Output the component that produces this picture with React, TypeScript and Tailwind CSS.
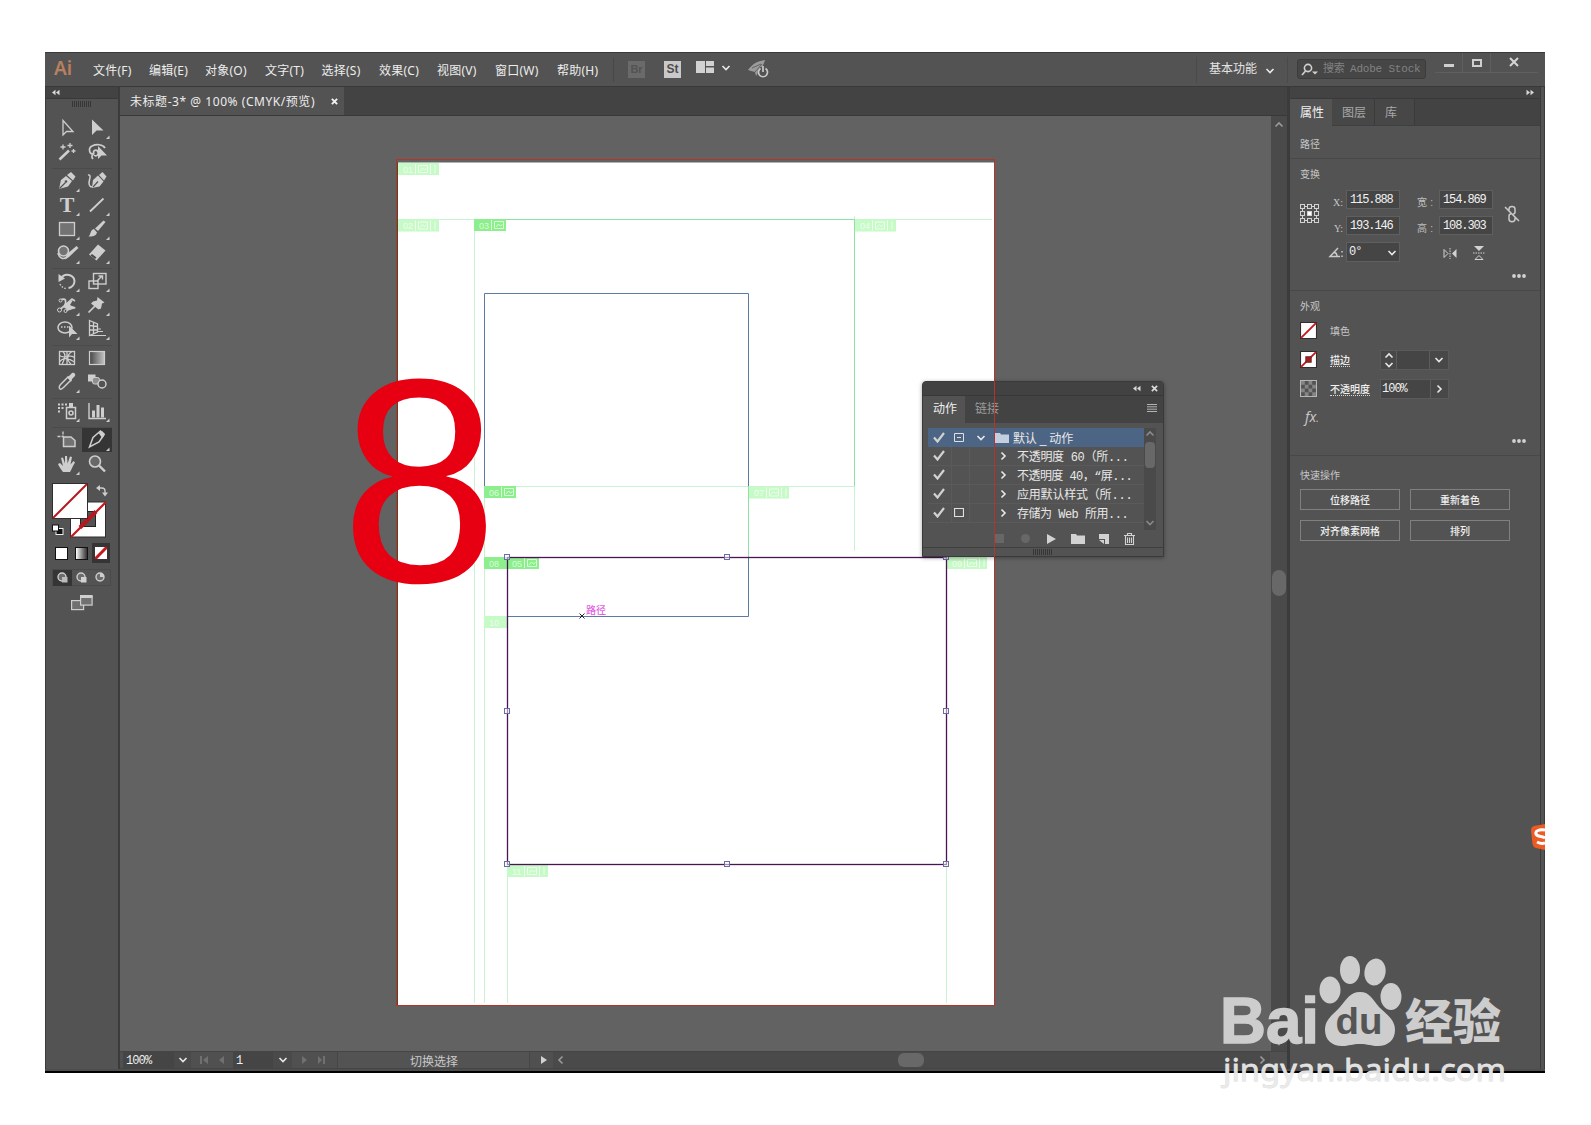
import React from "react";

const UI = "font-['Liberation_Sans','Noto_Sans_CJK_SC',sans-serif]";
const YH = "font-['Noto_Sans','Noto_Sans_CJK_SC',sans-serif]";
const MONO = "font-['Liberation_Mono','Noto_Sans_CJK_SC',monospace]";

function Chevron({ dir = "down", className = "" }: { dir?: "down" | "up" | "right" | "left"; className?: string }) {
  const d = { down: "M1.5 3l3.5 3.5L8.500 3", up: "M1.5 6.500L5 3l3.500 3.500", right: "M3.500 1.500L7 5 3.500 8.500", left: "M6.500 1.500L3 5l3.500 3.500" }[dir];
  return (
    <svg viewBox="0 0 10 10" className={`h-[10px] w-[10px] shrink-0 fill-none stroke-[#e8e8e8] stroke-[1.6] ${className}`}>
      <path d={d} />
    </svg>
  );
}

function DoubleArrow({ flip = false }: { flip?: boolean }) {
  return (
    <svg viewBox="0 0 9 7" className={`h-[7px] w-[9px] shrink-0 fill-[#d8d8d8] ${flip ? "-scale-x-100" : ""}`}>
      <path d="M4.500 .8v5.400L1 3.500zM8.500 .8v5.400L5 3.500z" />
    </svg>
  );
}

function Grip({ className = "" }: { className?: string }) {
  return (
    <svg viewBox="0 0 20 6" className={`h-[6px] w-[20px] ${className}`}>
      <path d="M.5 0v6M2.500 0v6M4.500 0v6M6.500 0v6M8.500 0v6M10.500 0v6M12.500 0v6M14.500 0v6M16.500 0v6M18.500 0v6" stroke="#363636" strokeWidth="1" />
    </svg>
  );
}

/* ---------- menu bar ---------- */

const menus: [string, string][] = [
  ["文件(F)", "w-[56px]"],
  ["编辑(E)", "w-[56px]"],
  ["对象(O)", "w-[60px]"],
  ["文字(T)", "w-[56.5px]"],
  ["选择(S)", "w-[57.5px]"],
  ["效果(C)", "w-[58px]"],
  ["视图(V)", "w-[58px]"],
  ["窗口(W)", "w-[62px]"],
  ["帮助(H)", "w-[56px]"],
];

function MenuBar() {
  return (
    <div className="flex h-[35px] shrink-0 border-t border-b border-[#393939] bg-[#535353]">
      <div className="w-[48px] pl-[9px] font-['Noto_Sans',sans-serif] text-[20px] leading-[30px] font-semibold text-[#b9805f]">
        <span className="inline-block origin-left scale-x-[0.95]">Ai</span>
      </div>
      <div className={`flex pt-[1px] text-[12px] leading-[33px] tracking-[0.25px] whitespace-nowrap text-[#ededed] ${YH}`}>
        {menus.map(([t, w]) => (
          <div key={t} className={w}>{t}</div>
        ))}
      </div>
      <div className="mt-[5px] h-[24px] w-px bg-[#474747]" />
      <div className="flex pt-[8px] pl-[14px]">
        <div className="h-[17px] w-[17px] bg-[#6a6a6a] text-center font-['Liberation_Sans',sans-serif] text-[11px] leading-[17px] font-bold text-[#535353]">Br</div>
        <div className="ml-[19px] h-[17px] w-[17px] bg-[#c9c9c9] text-center font-['Liberation_Sans',sans-serif] text-[12px] leading-[17px] font-bold text-[#4d4d4d]">St</div>
        <svg viewBox="0 0 18 12" className="ml-[15px] h-[12px] w-[18px] fill-[#d2d2d2]">
          <path d="M0 0h9v12H0zM10 0h8v5h-8zM10 6.500h8V12h-8z" />
        </svg>
        <Chevron className="mt-[2px] ml-[7px]" />
        <svg viewBox="0 0 24 18" className="mt-[-1px] ml-[17px] h-[18px] w-[24px]">
          <path d="M0 10C5 3 10 1 17 0c-1 4-3 8-7 13L8 16l-1-4-4-1z" fill="#9b9b9b" />
          <path d="M4 8l9-4M7 12l7-8" stroke="#656565" strokeWidth="1" />
          <circle cx="15" cy="12" r="5.500" fill="#535353" />
          <path d="M12.500 8.500a4.500 4.500 0 1 0 5 0M15 6v6" fill="none" stroke="#c9c9c9" strokeWidth="1.700" />
        </svg>
      </div>
      <div className="grow" />
      <div className="mt-[4px] h-[26px] w-px bg-[#4a4a4a]" />
      <div className={`w-[57px] pl-[12px] text-[12px] leading-[31px] whitespace-nowrap text-[#e4e4e4] ${YH}`}>基本功能</div>
      <Chevron className="mt-[13px] ml-[11px]" />
      <div className="mt-[4px] ml-[12px] h-[26px] w-px bg-[#4a4a4a]" />
      <div className="mt-[6px] ml-[9px] flex h-[20px] w-[129px] items-center rounded-[3px] border border-[#3c3c3c] bg-[#464646] pl-[3px]">
        <svg viewBox="0 0 18 13" className="h-[13px] w-[18px] fill-none stroke-[#d0d0d0] stroke-[1.6]">
          <circle cx="7" cy="5" r="3.600" />
          <path d="M4.500 8L1 12" />
          <path d="M11 8.500h6l-3 3z" fill="#d0d0d0" stroke="none" />
        </svg>
        <span className={`ml-[4px] text-[11px] tracking-[-0.2px] whitespace-pre text-[#828282] ${MONO}`}>
          <span>搜索</span> <span className="-ml-[1px]">Adobe Stock</span>
        </span>
      </div>
      <div className="ml-[9px] flex h-[20px] w-[103px] border-b border-[#5f5f5f]">
        <div className="w-[28px] border-r border-[#5f5f5f] pt-[11px] pl-[9px]"><div className="h-[3px] w-[10px] bg-[#cfcfcf]" /></div>
        <div className="w-[28px] border-r border-[#5f5f5f] pt-[6px] pl-[9px]"><div className="h-[8px] w-[10px] border-2 border-[#cfcfcf]" /></div>
        <div className="grow pt-[4px] pl-[18px]">
          <svg viewBox="0 0 10 10" className="h-[10px] w-[10px] stroke-[#d4d4d4] stroke-2"><path d="M1 1l8 8M9 1L1 9" /></svg>
        </div>
      </div>
      <div className="w-[7px]" />
    </div>
  );
}

/* ---------- toolbar ---------- */

const S = "#cecece";
const tools: Record<string, React.ReactNode> = {
  select: <path d="M8 4.500v14.500l3.500-3.500H18z" fill="none" stroke={S} strokeWidth="1.300" />,
  direct: <path d="M7 3.500v15.500l4.500-4.500H18.500z" fill={S} />,
  wand: <><path d="M4.500 19.500L14 10.500" stroke={S} strokeWidth="2.500" /><path d="M8 4.500v5M5.500 7h5M15 3v5M12.500 5.500h5M18.500 9v4M16.500 11h4" stroke={S} strokeWidth="1.300" /></>,
  lasso: <><path d="M9 14c-5 1-6-6-2-8s11-2 13 2M9 14c-2-4 3-5 4-2s-2 5-4 3M8 15c-2 1-1 3 0 4" fill="none" stroke={S} strokeWidth="1.700" /><path d="M13 6v13l3.500-3.500H22z" fill={S} /></>,
  pen: <><path d="M4 20l2-9 5-4 6 5-4 5.500z" fill={S} /><path d="M12 6l4-3 4.500 4.500-2.500 4z" fill={S} /><path d="M4.500 19.500l6-6" stroke="#535353" strokeWidth="1.200" /><circle cx="11" cy="12.500" r="1.300" fill="#535353" /></>,
  curve: <><path d="M3 6c4-1 1 5 1 8s2 5 4 3" fill="none" stroke={S} strokeWidth="1.500" /><path d="M7 19l1-8 5-4.500 5.500 6-4 5zM14 6l3.500-3 4 4.500-2.500 4z" fill={S} /><path d="M8 18l5-5.500" stroke="#535353" strokeWidth="1.200" /></>,
  type: <text x="12" y="19" textAnchor="middle" fill={S} fontSize="22" fontWeight="bold" fontFamily="Liberation Serif">T</text>,
  line: <path d="M5 18.500L18.500 5.500" stroke={S} strokeWidth="1.800" />,
  rect: <rect x="4.500" y="5.500" width="15" height="13" fill="#737373" stroke={S} strokeWidth="1.300" />,
  brush: <><path d="M10 11.500l8.500-8 2 1.500-7.500 9z" fill={S} /><path d="M9 12l3 3.500c-1 4-5 4-8.500 4 2.500-2 1.500-6.500 5.500-7.500z" fill={S} /></>,
  shaper: <><circle cx="8.500" cy="10" r="5" fill="#737373" stroke={S} strokeWidth="1.600" /><path d="M10 18.500l2-5.500 9.500-8 2 2-9.500 9z" fill={S} /><path d="M3 12c1 5 5 7 9 4" fill="none" stroke={S} strokeWidth="1.600" /></>,
  eraser: <><path d="M4 13.500L13 3.500l7.500 6-9 10z" fill={S} /><path d="M7 13l4.500 3.500-1.500 1.500-4.500-3.500z" fill="#4a4a4a" /></>,
  rotate: <><path d="M6 9.500C10 3 19 6 19.500 12c0 4-3 6.500-6 7" fill="none" stroke={S} strokeWidth="2" /><path d="M3.500 5v8L10 9.500z" fill={S} /><path d="M5 15c1.500 3 4 4.500 7 4.500" fill="none" stroke={S} strokeWidth="1.400" strokeDasharray="1.500 1.500" /></>,
  scale: <g fill="none" stroke={S} strokeWidth="1.400"><rect x="8.500" y="4.500" width="12.500" height="10.500" /><rect x="4" y="12" width="9" height="7.500" /><path d="M12 12l5-5M13.500 7H17.500v3.500" /></g>,
  width: <><path d="M5 7c7-3 6 2 5 6s6-1 10 2M5 16.500l6-5 6-5.500 3 2" fill="none" stroke={S} strokeWidth="1.700" /><path d="M9 11l9-4-3 5 6 3-9 3z" fill={S} /><circle cx="4.500" cy="17" r="2" fill="#535353" stroke={S} /><circle cx="10.500" cy="18" r="1.500" fill="#535353" stroke={S} /><circle cx="5.500" cy="7.500" r="1.500" fill="#535353" stroke={S} /></>,
  pin: <><path d="M12.500 4l7 5.500-2.500 1-1 5-2.500 1-7.500-6 2-2 4-1z" fill={S} /><path d="M3.500 19.500l6.500-6.500" stroke={S} strokeWidth="1.700" /></>,
  builder: <><ellipse cx="10" cy="10.500" rx="7" ry="5.500" fill="none" stroke={S} strokeWidth="1.500" /><path d="M6 10h8" stroke={S} strokeWidth="1.500" strokeDasharray="1.500 1.500" /><path d="M14 8.500v12l3-3.500h5.500z" fill={S} /></>,
  perspective: <><path d="M4.500 3.500l8 3.500v8l-8 3.500zM8.500 5.500v11M4.500 8.500l8 1M4.500 13h8" fill="none" stroke={S} strokeWidth="1.300" /><path d="M13 12h3M13 14.500h5M5 18.500h16" stroke={S} strokeWidth="1.200" /></>,
  mesh: <g fill="none" stroke={S} strokeWidth="1.300"><rect x="4.500" y="5.500" width="15" height="13" /><path d="M8 5.500c4 4 1 8-1 13M17 5.500c-6 4-5 9-1 13M4.500 9.500c5 4 9-2 15 2M4.500 16c4-6 10-3 15 0M12 5.500v13" /></g>,
  gradient: <><defs><linearGradient id="tg"><stop offset="0" stopColor="#454545" /><stop offset="1" stopColor="#c4c4c4" /></linearGradient></defs><rect x="4.500" y="5.500" width="15" height="13" fill="url(#tg)" stroke={S} strokeWidth="1.200" /></>,
  dropper: <><path d="M5 19c-2-1 0-4 1-5l7-7 3 3-7 7c-1 1-3 3-4 2z" fill="none" stroke={S} strokeWidth="1.500" /><path d="M12 7l2-1 3-3c2-1 4 1 3 3l-3 3-1 3z" fill={S} /></>,
  blend: <><rect x="3" y="4.500" width="7.500" height="7" fill={S} /><rect x="7.500" y="7.500" width="7" height="6.500" rx="2" fill="#8e8e8e" stroke={S} /><circle cx="17" cy="14" r="4" fill="#535353" stroke={S} strokeWidth="1.500" /></>,
  spray: <><path d="M3 5.500h2M6.500 5.500h2M10 5.500h2M3 9h2M6.500 9h2M3 12.500h2" stroke={S} strokeWidth="1.800" /><path d="M14 4h4v4h-4z" fill={S} /><rect x="11.500" y="8.500" width="9" height="11" fill="none" stroke={S} strokeWidth="1.500" /><circle cx="16" cy="14" r="2" fill="none" stroke={S} strokeWidth="1.600" /></>,
  graph: <><path d="M4 4v15.500h17" fill="none" stroke={S} strokeWidth="1.400" /><path d="M8.500 18.500v-7M13 18.500V6M17.500 18.500v-10" stroke={S} strokeWidth="3" /></>,
  artboard: <><path d="M8 3.500v5.500M2.500 8.500h5.500" stroke={S} strokeWidth="1.300" strokeDasharray="3 1" /><path d="M8.500 9h7.500l4 3.500v6h-11.500z" fill="#737373" stroke={S} strokeWidth="1.500" /></>,
  slice: <><path d="M4.500 19L8 9.500 15.500 3l3.500 3.500L14 14z" fill="none" stroke={S} strokeWidth="1.500" /><path d="M13.500 5l3.500-2 3 3-2.500 4.500z" fill={S} /></>,
  hand: <path d="M8 20c-2-3-4-5-5-8l2-1 3 3-2-8 2-.500 2 6V4h2l.500 7.500L15 4.500l2 .500-1.500 7.500 3-3.500 1.500 1.500c-2 3-3 6-5 9.500z" fill={S} />,
  zoom: <><circle cx="10" cy="9.500" r="5.500" fill="#686868" stroke={S} strokeWidth="1.600" /><path d="M14 13.500l6 6" stroke={S} strokeWidth="2.400" /></>,
};

const toolGroups: { gap: string; rows: string[][] }[] = [
  { gap: "", rows: [["select", "direct+"], ["wand", "lasso"]] },
  { gap: "mt-[4px] border-t", rows: [["pen+", "curve"], ["type+", "line+"], ["rect+", "brush+"], ["shaper+", "eraser+"]] },
  { gap: "mt-[3px] border-t", rows: [["rotate+", "scale+"], ["width+", "pin+"], ["builder+", "perspective+"]] },
  { gap: "mt-[4px] border-t", rows: [["mesh", "gradient"], ["dropper+", "blend"]] },
  { gap: "mt-[4px] border-t", rows: [["spray+", "graph+"]] },
  { gap: "mt-[4px] border-t", rows: [["artboard", "slice+"], ["hand+", "zoom"]] },
];

function Tool({ name }: { name: string }) {
  const id = name.replace("+", "");
  return (
    <svg viewBox="-3 0 30 24" className={`h-[24px] w-[30px] ${id === "slice" ? "bg-[#353535]" : ""}`}>
      {tools[id]}
      {name.endsWith("+") && <path d="M24.500 19.500V23H21z" fill={S} />}
    </svg>
  );
}

function Toolbar() {
  return (
    <div className="flex w-[75px] shrink-0 flex-col border-r-2 border-l border-[#3b3b3b] bg-[#535353]">
      <div className="flex h-[12px] items-center border-b border-[#393939] bg-[#434343] pl-[5px]"><DoubleArrow /></div>
      <Grip className="mt-[2px] ml-[26px]" />
      <div className="mt-[9px] flex flex-col px-[6px]">
        {toolGroups.map((g, i) => (
          <div key={i} className={`border-[#4b4b4b] ${g.gap}`}>
            {g.rows.map((r) => (
              <div key={r[0]} className="flex">{r.map((n) => <Tool key={n} name={n} />)}</div>
            ))}
          </div>
        ))}
      </div>
      <svg viewBox="50 480 66 60" className="mt-[4px] ml-[4px] h-[60px] w-[66px]">
        <rect x="70.500" y="502" width="35" height="35" fill="#fff" stroke="#2f2f2f" strokeWidth="1" />
        <path d="M71 537l35-35" stroke="#c5181e" strokeWidth="2.200" />
        <rect x="80.500" y="511.500" width="15" height="15" fill="#535353" stroke="#222" />
        <path d="M80 527.500l16-16" stroke="#b5181e" strokeWidth="4" />
        <rect x="52.500" y="483.500" width="35" height="35" fill="#fff" stroke="#2f2f2f" strokeWidth="1" />
        <path d="M53 518l34-34" stroke="#b5181e" strokeWidth="2" />
        <path d="M99 488h3q3 0 3 3v3" fill="none" stroke={S} strokeWidth="1.300" />
        <path d="M100 485v6l-4-3zM102 492.500h6l-3 4z" fill={S} />
        <rect x="56" y="528.500" width="7" height="6" fill="#111" stroke="#eee" />
        <rect x="52.500" y="525" width="6" height="6" fill="#fff" stroke="#111" />
      </svg>
      <div className="mt-[3px] ml-[6px] flex h-[20px] items-center">
        <div className="ml-[3px] h-[13px] w-[13px] border border-[#111] bg-white" />
        <div className="ml-[7px] h-[13px] w-[13px] border border-[#111] bg-linear-to-r from-white to-[#333]" />
        <div className="ml-[4px] flex h-[20px] w-[18px] items-center justify-center bg-[#353535]">
          <svg viewBox="0 0 12 12" className="h-[12px] w-[12px]"><path d="M0 0h12v12H0z" fill="#fff" /><path d="M0 12L12 0" stroke="#c5181e" strokeWidth="3" /></svg>
        </div>
      </div>
      <div className="mt-[6px] ml-[6px] flex h-[17px] w-[59px] border border-[#4a4a4a]">
        {[0, 1, 2].map((i) => (
          <svg key={i} viewBox="0 0 19 16" className={`h-[16px] w-[19px] ${i === 0 ? "bg-[#353535]" : ""}`}>
            <circle cx="9" cy="7" r="4" fill="#6d6d6d" stroke={S} strokeWidth="1.400" />
            {i < 2 ? <rect x="9" y="7" width="5.500" height="5.500" fill={i ? "#d2d2d2" : "#bbb"} /> : <path d="M9 7V3a4 4 0 0 1 4 4z" fill={S} />}
          </svg>
        ))}
      </div>
      <svg viewBox="0 0 22 16" className="mt-[9px] ml-[25px] h-[16px] w-[22px]">
        <rect x="0.600" y="5.600" width="12" height="9" fill="#707070" stroke={S} strokeWidth="1.200" />
        <rect x="9.600" y="0.600" width="11.500" height="9.500" fill="#707070" stroke={S} strokeWidth="1.200" />
        <path d="M9 2h12.500" stroke={S} strokeWidth="2" />
      </svg>
    </div>
  );
}

/* ---------- artwork ---------- */

const handles = [[507, 557], [727, 557], [946, 557], [507, 711], [946, 711], [507, 864], [727, 864], [946, 864]];

const sliceTags: { x: number; y: number; w: number; n: string; dark: boolean }[] = [
  { x: 398, y: 163, w: 41, n: "01", dark: false },
  { x: 398, y: 219.5, w: 41, n: "02", dark: false },
  { x: 474, y: 219, w: 32, n: "03", dark: true },
  { x: 855, y: 219.5, w: 41, n: "04", dark: false },
  { x: 484, y: 486, w: 32, n: "06", dark: true },
  { x: 749, y: 486.5, w: 40, n: "07", dark: false },
  { x: 484, y: 557, w: 23, n: "08", dark: true },
  { x: 507, y: 557, w: 32, n: "05", dark: true },
  { x: 947, y: 557, w: 40, n: "09", dark: false },
  { x: 484, y: 616, w: 23, n: "10", dark: false },
  { x: 507, y: 865, w: 41, n: "11", dark: false },
];

function Artwork() {
  return (
    <svg viewBox="120 116 1151 935" className="h-[935px] w-[1151px] shrink-0 bg-[#626262]">
      <rect x="398" y="162.500" width="596" height="843.500" fill="#fff" />
      <path d="M397.500 162v843" stroke="#4b4b35" />
      <g fill="none" stroke="#c9f3d0">
        <path d="M398 219.500H992M474.500 219V1003M484.500 486V1003M484 486.500H854M854.500 216V551M507.500 865V1003M946.500 865V1003" />
      </g>
      <path d="M474 219.500H854.500V486M748.500 486V557" fill="none" stroke="#8fe0a4" />
      <path d="M484.500 486V293.500H748.500V486M748.500 557V616.500H507" fill="none" stroke="#5a7ba3" />
      {sliceTags.map((t, i) => (
        <g key={i}>
          <rect x={t.x} y={t.y} width={t.w} height="12" fill={t.dark ? "#8cee8c" : "#c6fac6"} />
          <text x={t.x + 5} y={t.y + 9.500} fontSize="9" fill={t.dark ? "#d8ffd8" : "#effeef"} fontFamily="Liberation Sans">{t.n}</text>
          {t.w > 30 && <path d={`M${t.x + 20.500} ${t.y + 2.500}h9v7h-9zM${t.x + 22} ${t.y + 8}l2.500-3 2 2 2-1.500M${t.x + 17.500} ${t.y + 1}v10`} fill="none" stroke={t.dark ? "#d8ffd8" : "#effeef"} />}
          {t.w > 35 && <path d={`M${t.x + 32.500} ${t.y + 1}v10M${t.x + 37} ${t.y + 2}v8`} stroke="#effeef" />}
        </g>
      ))}
      <rect x="507.500" y="557.500" width="439" height="307" fill="none" stroke="#4b1452" strokeWidth="1.300" />
      {handles.map(([x, y]) => (
        <rect key={`${x}-${y}`} x={x - 2.500} y={y - 2.500} width="5" height="5" fill="#fff" fillOpacity="0.500" stroke="#6a6aa5" />
      ))}
      <path d="M579.500 613.500l5 5M584.500 613.500l-5 5" stroke="#222" />
      <text x="586" y="614" fontSize="10" fill="#e35fe3" fontWeight="500" fontFamily="Noto Sans CJK SC">路径</text>
      <rect x="396.500" y="159.500" width="598" height="846" fill="none" stroke="#b5342a" />
      <text x="0" y="0" transform="translate(340.700 581.500) scale(0.994 1.020)" fontSize="285" fill="#e60012" fontFamily="Liberation Sans">8</text>
    </svg>
  );
}

function StatusBar() {
  const dim = "h-[8px] w-[9px] fill-[#707070]";
  return (
    <div className="flex h-[18px] shrink-0 items-center border-t border-b border-[#454545] bg-[#505050]">
      <div className={`ml-[3px] h-[16px] w-[51px] bg-[#454545] pl-[3px] text-[12px] leading-[19px] tracking-[-0.9px] text-[#f0f0f0] ${MONO}`}>100%</div>
      <div className="flex h-[16px] w-[17px] items-center justify-center bg-[#4a4a4a]"><Chevron /></div>
      <div className="flex w-[42px] gap-[9px] pl-[9px]">
        <svg viewBox="0 0 9 8" className={dim}><path d="M0 0h2v8H0zM8 0v8L3 4z" /></svg>
        <svg viewBox="0 0 9 8" className={dim}><path d="M6 0v8L1 4z" /></svg>
      </div>
      <div className={`h-[16px] w-[40px] bg-[#454545] pl-[3px] text-[12px] leading-[19px] text-[#f0f0f0] ${MONO}`}>1</div>
      <div className="flex h-[16px] w-[19px] items-center justify-center bg-[#4a4a4a]"><Chevron /></div>
      <div className="flex w-[45px] gap-[8px] pl-[9px]">
        <svg viewBox="0 0 9 8" className={dim}><path d="M1 0v8l5-4z" /></svg>
        <svg viewBox="0 0 9 8" className={dim}><path d="M0 0v8l4-4zM5 0h2v8H5z" /></svg>
      </div>
      <div className={`h-[16px] w-[193px] border-r border-l border-[#474747] bg-[#535353] pl-[72px] text-[12px] leading-[20px] text-[#c9c9c9] ${UI}`}>切换选择</div>
      <svg viewBox="0 0 6 8" className="ml-[11px] h-[8px] w-[6px] fill-[#d2d2d2]"><path d="M0 0v8l6-4z" /></svg>
      <div className="ml-[6px] flex h-[16px] w-[717px] items-center bg-[#4a4a4a]">
        <Chevron dir="left" className="ml-[3px] stroke-[#9a9a9a]!" />
        <div className="ml-[332px] h-[14px] w-[26px] rounded-[6px] bg-[#686868]" />
        <Chevron dir="right" className="ml-[333px] stroke-[#9a9a9a]!" />
      </div>
    </div>
  );
}

function DocumentArea() {
  return (
    <div className="flex w-[1167px] shrink-0 flex-col bg-[#4a4a4a]">
      <div className="flex h-[29px] shrink-0 border-b border-[#393939] bg-[#434343]">
        <div className={`flex w-[224px] items-center bg-[#535353] pl-[10px] text-[12px] whitespace-nowrap text-[#ededed] ${YH}`}>
          <span className="w-[201px] pt-[2px] tracking-[0.55px]">未标题-3* @ 100% (CMYK/预览)</span>
          <svg viewBox="0 0 8 8" className="mt-px h-[7px] w-[7px] stroke-[#f2f2f2] stroke-[2.2]"><path d="M1 1l6 6M7 1L1 7" /></svg>
        </div>
      </div>
      <div className="flex h-[935px] shrink-0">
        <Artwork />
        <div className="flex w-[16px] flex-col items-center bg-[#4a4a4a]">
          <Chevron dir="up" className="mt-[4px] stroke-[#9a9a9a]!" />
          <div className="mt-[440px] h-[26px] w-[14px] rounded-[7px] bg-[#686868]" />
          <Chevron className="mt-[442px] stroke-[#9a9a9a]!" />
        </div>
      </div>
      <StatusBar />
    </div>
  );
}

/* ---------- properties panel ---------- */

function Field({ label, value, cjk = false }: { label: string; value: string; cjk?: boolean }) {
  return (
    <>
      {cjk ? (
        <span className="flex w-[22px] shrink-0 justify-between pt-[5px] pr-[6px] text-[10px] whitespace-nowrap text-[#bdbdbd]"><span>{label}</span><span>:</span></span>
      ) : (
        <span className={`w-[17px] shrink-0 pt-[5px] pr-[3px] text-right font-['Liberation_Serif',serif] text-[10px] whitespace-nowrap text-[#c6c6c6]`}>{label}</span>
      )}
      <div className={`h-[19px] w-[54px] shrink-0 border border-[#5f5f5f] bg-[#454545] pl-[3px] text-[12px] leading-[18px] tracking-[-1.1px] text-[#f2f2f2] ${MONO}`}>{value}</div>
    </>
  );
}

function Dots() {
  return <svg viewBox="0 0 14 4" className="h-[4px] w-[14px] fill-[#d2d2d2]"><circle cx="2" cy="2" r="1.900" /><circle cx="7" cy="2" r="1.900" /><circle cx="12" cy="2" r="1.900" /></svg>;
}

function RefPoint() {
  return (
    <svg viewBox="0 0 19 19" className="h-[19px] w-[19px] fill-none stroke-[#d2d2d2]">
      <path d="M3 2.500h13M3 16.500h13M2.500 3v13M16.500 3v13" />
      {[0.5, 7.5, 14.5].map((x) => [0.5, 7.5, 14.5].map((y) => (
        <rect key={`${x}${y}`} x={x} y={y} width="4" height="4" fill={x === 7.5 && y === 7.5 ? "#fff" : "#535353"} />
      )))}
    </svg>
  );
}

function Properties() {
  const row = "flex items-center";
  return (
    <div className={`flex w-[250px] flex-col text-[10px] text-[#c6c6c6] ${UI}`}>
      <div className="flex h-[12px] items-center justify-end border-b border-[#393939] bg-[#434343] pr-[5px]"><DoubleArrow flip /></div>
      <div className="flex h-[27px] border-b border-[#3f3f3f] bg-[#434343] text-[12px] leading-[29px] text-[#a8a8a8]">
        <div className="-mb-px w-[42px] bg-[#535353] pl-[10px] text-[#f2f2f2]">属性</div>
        <div className="w-[43px] border-r border-[#3b3b3b] bg-[#474747] pl-[10px]">图层</div>
        <div className="w-[40px] border-r border-[#3b3b3b] bg-[#474747] pl-[10px]">库</div>
      </div>
      <div className="h-[33px] border-b border-[#484848] pl-[10px] leading-[37px]">路径</div>
      <div className="h-[132px] border-b border-[#484848] pl-[10px]">
        <div className="h-[31px] leading-[32px]">变换</div>
        <div className="flex">
          <div className="w-[23px] pt-[14px]"><RefPoint /></div>
          <div>
            <div className="flex h-[26px] pl-[6px]">
              <Field label="X:" value="115.888" />
              <div className="w-[17px]" />
              <Field label="宽" value="154.869" cjk />
            </div>
            <div className="flex h-[26px] pl-[6px]">
              <Field label="Y:" value="193.146" />
              <div className="w-[17px]" />
              <Field label="高" value="108.303" cjk />
            </div>
            <div className="flex h-[26px] pl-[5px]">
              <svg viewBox="0 0 18 12" className="mt-[5px] h-[12px] w-[18px] fill-none stroke-[#c9c9c9] stroke-[1.5]"><path d="M10 1L2 9.500h10M6 5.500c3 0 3 3 3 4" /><path d="M14 4v1.500M14 8.500V10" /></svg>
              <div className={`flex h-[20px] w-[54px] border border-[#5f5f5f] bg-[#454545] pl-[2px] text-[12px] leading-[18px] text-[#f2f2f2] ${MONO}`}>
                <span className="w-[38px] tracking-[-1px]">0°</span>
                <Chevron className="mt-[5px]" />
              </div>
              <svg viewBox="0 0 14 11" className="mt-[6px] ml-[43px] h-[11px] w-[14px] fill-[#d2d2d2]"><path d="M1 1.500v8L5 5.500z" fill="none" stroke="#d2d2d2" /><path d="M13.500 1v9L9 5.500z" /><path d="M7 0v11" stroke="#d2d2d2" strokeDasharray="1.500 1" /></svg>
              <svg viewBox="0 0 12 14" className="mt-[4px] ml-[16px] h-[14px] w-[12px] fill-[#d2d2d2]"><path d="M1 0h10L6 5z" /><path d="M2 13.500h8L6 9.500z" fill="none" stroke="#d2d2d2" /><path d="M0 7h12" stroke="#d2d2d2" strokeDasharray="1.500 1" /></svg>
            </div>
          </div>
          <svg viewBox="0 0 16 18" className="mt-[15px] ml-[11px] h-[18px] w-[16px] fill-none stroke-[#c9c9c9] stroke-[1.5]"><path d="M5 6V4c0-3.500 6-3.500 6 0v3c0 1.500-1 2-2 2M11 12v2c0 3.500-6 3.500-6 0v-3c0-1 .500-2 2-2M1 2l14 14" /></svg>
        </div>
        <div className="flex justify-end pt-[6px] pr-[14px]"><Dots /></div>
      </div>
      <div className="h-[165px] border-b border-[#484848] pl-[10px]">
        <div className="h-[25px] leading-[31px]">外观</div>
        <div className={`${row} h-[29px]`}>
          <svg viewBox="0 0 16 16" className="h-[17px] w-[17px]"><path d="M.5.5h15v15H.5z" fill="#fff" stroke="#2f2f2f" /><path d="M1 15L15 1" stroke="#c5181e" strokeWidth="1.800" /></svg>
          <span className="mt-[2px] ml-[13px]">填色</span>
        </div>
        <div className={`${row} h-[29px]`}>
          <svg viewBox="0 0 16 16" className="h-[17px] w-[17px]"><path d="M.5.5h15v15H.5z" fill="#fff" stroke="#2f2f2f" /><path d="M1 15L15 1" stroke="#c5181e" strokeWidth="1.800" /><path d="M5.500 5.500h5v5h-5z" fill="#a02020" stroke="#7a2020" /></svg>
          <span className="mt-[2px] ml-[13px] w-[50px] font-medium text-[#f0f0f0]"><span className="border-b border-dotted border-[#d8d8d8]">描边</span></span>
          <div className="flex h-[20px] w-[69px] border border-[#5a5a5a] bg-[#484848]">
            <div className="flex w-[16px] flex-col items-center border-r border-[#5c5c5c]"><Chevron dir="up" /><Chevron className="-mt-px" /></div>
            <div className="w-[33px] border-r border-[#5c5c5c] bg-[#454545]" />
            <Chevron className="mt-[4px] ml-[4px]" />
          </div>
        </div>
        <div className={`${row} h-[29px]`}>
          <svg viewBox="0 0 16 16" className="h-[17px] w-[17px]"><path d="M.5.5h15v15H.5z" fill="#535353" stroke="#b5b5b5" /><path d="M1 1h3.500v3.500H1zM8 1h3.500v3.500H8zM4.500 4.500H8V8H4.500zM11.500 4.500H15V8h-3.500zM1 8h3.500v3.500H1zM8 8h3.500v3.500H8zM4.500 11.500H8V15H4.500zM11.500 11.500H15V15h-3.500z" fill="#858585" /></svg>
          <span className="mt-[2px] ml-[13px] w-[50px] font-medium whitespace-nowrap text-[#f0f0f0]"><span className="border-b border-dotted border-[#d8d8d8]">不透明度</span></span>
          <div className={`flex h-[20px] w-[69px] border border-[#5a5a5a] bg-[#484848] text-[12px] leading-[18px] tracking-[-1px] text-[#f2f2f2] ${MONO}`}>
            <div className="w-[50px] border-r border-[#5c5c5c] bg-[#454545] pl-px">100%</div>
            <Chevron dir="right" className="mt-[4px] ml-[3px]" />
          </div>
        </div>
        <div className="h-[36px] pl-[5px] font-['Noto_Sans',sans-serif] text-[14px] leading-[28px] italic">fx<span className="text-[10px]">.</span></div>
        <div className="flex justify-end pr-[14px]"><Dots /></div>
      </div>
      <div className="pl-[10px]">
        <div className="h-[33px] pt-[4px] leading-[31px]">快速操作</div>
        <div className="grid w-[210px] grid-cols-[100px_100px] gap-[10px] font-medium text-[#f0f0f0]">
          {["位移路径", "重新着色", "对齐像素网格", "排列"].map((t) => (
            <div key={t} className="h-[21px] border border-[#808080] text-center leading-[22px]">{t}</div>
          ))}
        </div>
      </div>
    </div>
  );
}

/* ---------- floating actions panel ---------- */

const actions = [
  { t: "不透明度 60（所...", box: false, track: "tracking-[-0.3px]" },
  { t: "不透明度 40，“屏...", box: false, track: "tracking-[-0.55px]" },
  { t: "应用默认样式（所...", box: false, track: "tracking-[-0.2px]" },
  { t: "存储为 Web 所用...", box: true, track: "tracking-[-0.5px]" },
];

function Check() {
  return <svg viewBox="0 0 12 11" className="-mt-px h-[11px] w-[12px] fill-none stroke-[#d2d2d2] stroke-[2.2]"><path d="M1 5.500l3.500 4L11 1" /></svg>;
}

function ActionsPanel() {
  return (
    <div className="absolute top-[381px] left-[922px] flex h-[176px] w-[242px] flex-col rounded-t-[4px] border border-[#3a3a3a] bg-[#535353] shadow-[0_1px_4px_rgba(0,0,0,0.35)]">
      <div className="flex h-[14px] shrink-0 items-center rounded-t-[3px] border-b border-[#383838] bg-[#424242] pl-[209px]">
        <DoubleArrow />
        <svg viewBox="0 0 8 8" className="ml-[10px] h-[7px] w-[7px] stroke-[#d8d8d8] stroke-[2]"><path d="M1 1l6 6M7 1L1 7" /></svg>
      </div>
      <div className={`flex h-[27px] shrink-0 bg-[#434343] text-[12px] leading-[27px] text-[#9c9c9c] ${UI}`}>
        <div className="w-[42px] bg-[#535353] pl-[10px] text-[#f0f0f0]">动作</div>
        <div className="w-[186px] pl-[10px]">链接</div>
        <svg viewBox="0 0 10 8" className="mt-[8px] -ml-[4px] h-[8px] w-[10px]"><path d="M0 .5h10M0 2.800h10M0 5.200h10M0 7.500h10" stroke="#b4b4b4" /></svg>
      </div>
      <div className="mt-[5px] ml-[5px] flex h-[102px] shrink-0 text-[12px] text-[#e8e8e8]">
        <div className="w-[216px]">
          <div className="flex h-[19px] items-center bg-[#4d6584] pl-[5px]">
            <Check />
            <svg viewBox="0 0 10 10" className="ml-[9px] h-[10px] w-[10px] fill-none stroke-[#e0e0e0]"><path d="M.5.5h9v8h-9zM3 4.500h4" /></svg>
            <Chevron className="ml-[12px]" />
            <svg viewBox="0 0 14 10" className="mt-px ml-[9px] h-[10px] w-[14px] fill-[#c3cfde]"><path d="M0 0h5l1 1.500h8V10H0z" /></svg>
            <span className={`mt-[2px] ml-[4px] tracking-[-0.2px] whitespace-pre ${UI}`}>默认 _ 动作</span>
          </div>
          {actions.map((a) => (
            <div key={a.t} className="flex h-[19px] items-center border-b border-[#5a5a5a] pl-[5px]">
              <Check />
              <div className="ml-[6px] flex h-full w-[19px] items-center border-r border-l border-[#5a5a5a] pl-[2px]">
                {a.box && <svg viewBox="0 0 10 10" className="h-[10px] w-[10px] fill-none stroke-[#e0e0e0] stroke-[1.2]"><path d="M.5.5h9v8h-9z" /></svg>}
              </div>
              <Chevron dir="right" className="ml-[28px]" />
              <span className={`mt-[3px] ml-[9px] w-[126px] whitespace-nowrap ${a.track} ${MONO}`}>{a.t}</span>
            </div>
          ))}
        </div>
        <div className="flex w-[12px] flex-col items-center bg-[#4a4a4a]">
          <Chevron dir="up" className="mt-px stroke-[#8a8a8a]!" />
          <div className="mt-[3px] h-[26px] w-[10px] rounded-[4px] bg-[#686868]" />
          <Chevron className="mt-[50px] stroke-[#8a8a8a]!" />
        </div>
      </div>
      <div className="flex h-[17px] shrink-0 items-center pl-[72px]">
        <div className="h-[9px] w-[9px] bg-[#676767]" />
        <div className="ml-[17px] h-[9px] w-[9px] rounded-full bg-[#676767]" />
        <svg viewBox="0 0 9 10" className="ml-[17px] h-[10px] w-[9px] fill-[#d2d2d2]"><path d="M0 0v10l9-5z" /></svg>
        <svg viewBox="0 0 14 10" className="ml-[15px] h-[10px] w-[14px] fill-[#d2d2d2]"><path d="M0 0h5l1 1.500h8V10H0z" /></svg>
        <svg viewBox="0 0 10 10" className="ml-[14px] h-[10px] w-[10px] fill-[#d2d2d2]"><path d="M0 0h10v10H6V5H0zM0 6h5v4z" /></svg>
        <svg viewBox="0 0 11 12" className="ml-[15px] h-[12px] w-[11px] fill-none stroke-[#d2d2d2] stroke-[1.1]"><path d="M0 2.500h11M3.500 2V.5h4V2M1.500 3v8.500h8V3M3.500 4.500V10M5.500 4.500V10M7.500 4.500V10" /></svg>
      </div>
      <div className="flex h-[9px] items-center justify-center border-t border-[#3f3f3f]"><Grip className="h-[4px]" /></div>
    </div>
  );
}

/* ---------- watermark ---------- */

function Watermark() {
  return (
    <div className="absolute top-[950px] left-[1215px] h-[150px] w-[300px]">
      <svg viewBox="1215 950 300 150" className="h-[150px] w-[300px]">
        <g fill="#cdcdcd">
          <text x="1220" y="1043" fontSize="64" fontWeight="bold" fontFamily="Liberation Sans" textLength="99" lengthAdjust="spacingAndGlyphs" stroke="#cdcdcd" strokeWidth="1.500">Bai</text>
          <ellipse cx="1330" cy="990" rx="10.500" ry="13.500" />
          <ellipse cx="1350" cy="970" rx="10" ry="14" />
          <ellipse cx="1375" cy="972" rx="10.500" ry="13.500" transform="rotate(12 1375 972)" />
          <ellipse cx="1391" cy="996.500" rx="10.500" ry="13.500" />
          <path d="M1360 992c10 0 13 8 19 15 7 7 16 12 16 23 0 10-7 16-17 16-7 0-10-2-18-2s-11 2-18 2c-10 0-17-6-17-16 0-11 8-15 15-23 7-8 10-15 20-15z" />
          <text x="1405" y="1039" fontSize="48" fontWeight="900" fontFamily="Noto Sans CJK SC" textLength="96">经验</text>
        </g>
        <text x="1335.500" y="1033.500" fontSize="37" fontWeight="bold" fill="#555" fontFamily="Liberation Sans" textLength="47" lengthAdjust="spacingAndGlyphs">du</text>
        <text x="1223" y="1081" fontSize="31" fill="#e9e9e9" fillOpacity="0.950" stroke="#dedede" strokeWidth="0.800" paintOrder="stroke" fontFamily="Noto Sans" textLength="283" lengthAdjust="spacingAndGlyphs">jingyan.baidu.com</text>
      </svg>
    </div>
  );
}

export default function App() {
  return (
    <div className="relative h-[1125px] w-[1591px] overflow-hidden bg-white pt-[52px] pl-[45px]">
      <div className="flex h-[1021px] w-[1500px] flex-col border-b-2 border-black bg-[#4d4d4d]">
        <MenuBar />
        <div className="flex h-[982px] shrink-0">
          <Toolbar />
          <DocumentArea />
          <div className="flex w-[258px] border-l-[3px] border-[#3b3b3b] bg-[#535353]">
            <Properties />
            <div className="grow border-r border-l border-[#3b3b3b]" />
          </div>
        </div>
      </div>
      <ActionsPanel />
      <div className="absolute top-[381px] left-[994px] h-[176px] w-px bg-[#b5342a]" />
      <svg viewBox="0 0 14 28" className="absolute top-[823px] left-[1531px] h-[28px] w-[14px]">
        <path d="M3 3l11-2v26l-9-2Q2 24 1.500 21L0 7Q0 4 3 3z" fill="#ee5a24" />
        <path d="M14 7C8 6 4 8 5 11s6 2 9 4M14 20c-3 1-6 0-8-1" fill="none" stroke="#fff" strokeWidth="3" />
      </svg>
      <Watermark />
    </div>
  );
}
